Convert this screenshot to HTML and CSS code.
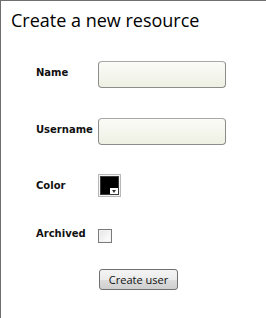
FILE: index.html
```html
<!DOCTYPE html>
<html lang="en">
<head>
    <meta charset="UTF-8">
    <title>Create a new resource</title>
    <link rel="stylesheet" href="styles.css">
</head>
<body>
    <div class="page">
        <h1 class="page-title">Create a new resource</h1>

        <form class="resource-form">
            <div class="form-row row-name">
                <label class="field-label" for="name">Name</label>
                <input class="text-field" type="text" id="name" name="name">
            </div>

            <div class="form-row row-username">
                <label class="field-label" for="username">Username</label>
                <input class="text-field" type="text" id="username" name="username">
            </div>

            <div class="form-row row-color">
                <label class="field-label label-center">Color</label>
                <div class="color-swatch">
                    <div class="color-fill"></div>
                    <span class="color-arrow"></span>
                </div>
            </div>

            <div class="form-row row-archived">
                <label class="field-label" for="archived">Archived</label>
                <span class="check-box" id="archived"></span>
            </div>

            <div class="form-row row-submit">
                <span class="field-label"></span>
                <button type="submit" class="submit-btn">Create user</button>
            </div>
        </form>
    </div>
</body>
</html>
```

FILE: styles.css
```css
/* Base */
* {
    box-sizing: border-box;
}

html,
body {
    margin: 0;
    padding: 0;
    background: #ffffff;
}

.page {
    min-height: 100vh;
    border-top: 1px solid #6f6f6f;
    border-left: 1px solid #6f6f6f;
}

/* Title */
.page-title {
    margin: 7px 0 0 10px;
    font-family: "Open Sans", sans-serif;
    font-size: 18px;
    font-weight: normal;
    line-height: 24px;
    color: #000;
}

/* Form */
.resource-form {
    margin-top: 29px;
    padding-left: 35px;
}

.form-row {
    display: flex;
    align-items: center;
}

.row-username {
    margin-top: 30px;
}

.row-color {
    margin-top: 29px;
}

.row-archived {
    margin-top: 31px;
}

.row-submit {
    margin-top: 26px;
}

.field-label {
    width: 62px;
    flex: none;
    margin-bottom: 4px;
    font-family: "DejaVu Sans", sans-serif;
    font-size: 10px;
    font-weight: bold;
    color: #111;
}

.field-label.label-center {
    margin-bottom: 0;
}

.text-field {
    width: 128px;
    height: 27px;
    margin: 0;
    padding: 0 5px;
    border: 1px solid #8c8c8c;
    border-top-color: #a8a8a8;
    border-radius: 4px;
    background: linear-gradient(to bottom, #fbfbf7, #eef0e3);
    font-family: "DejaVu Sans", sans-serif;
    font-size: 11px;
    outline: none;
}

/* Color picker */
.color-swatch {
    position: relative;
    width: 23px;
    height: 23px;
    padding: 1px;
    border: 1px solid #b8b8b8;
    background: #f4f4f4;
}

.color-fill {
    width: 100%;
    height: 100%;
    border: 1px solid #3a3a3a;
    background: #000000;
}

.color-arrow {
    position: absolute;
    right: 2px;
    bottom: 2px;
    width: 8px;
    height: 6px;
    background: #ffffff;
}

.color-arrow::after {
    content: "";
    position: absolute;
    left: 2px;
    top: 2px;
    border-left: 2px solid transparent;
    border-right: 2px solid transparent;
    border-top: 3px solid #333;
}

/* Checkbox */
.check-box {
    display: block;
    width: 14px;
    height: 14px;
    border: 1px solid #7a7a7a;
    background: linear-gradient(to bottom right, #e6e6e6, #ffffff);
    box-shadow: inset 0 0 0 1px #f2f2f2;
}

/* Button */
.submit-btn {
    width: 79px;
    height: 21px;
    margin: 0 0 0 1px;
    padding: 0;
    border: 1px solid #707070;
    border-radius: 3px;
    background: linear-gradient(to bottom, #f4f4f4 0%, #ebebeb 50%, #dddddd 51%, #cfcfcf 100%);
    font-family: "Open Sans", sans-serif;
    font-size: 11px;
    color: #111;
    cursor: pointer;
}
```
